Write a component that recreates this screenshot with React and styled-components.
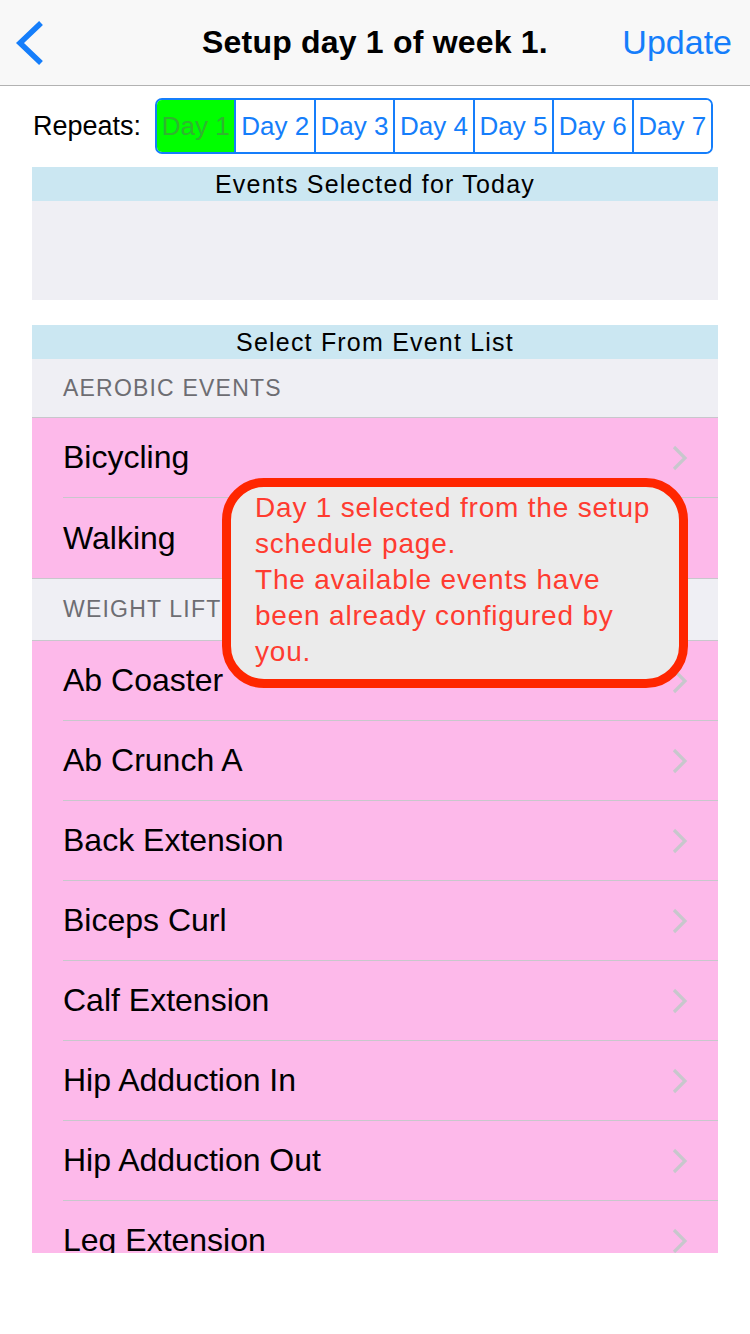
import React from "react";
import styled, { createGlobalStyle } from "styled-components";

const Global = createGlobalStyle`
  html, body { margin: 0; padding: 0; background: #ffffff; }
  body { font-family: "Liberation Sans", Arial, sans-serif; -webkit-font-smoothing: antialiased; }
  * { box-sizing: border-box; }
`;

const Screen = styled.div`
  position: relative;
  width: 750px;
  height: 1334px;
  overflow: hidden;
  background: #ffffff;
`;

const NavBar = styled.header`
  height: 86px;
  background: #f8f8f8;
  border-bottom: 1px solid #b2b2b2;
  display: flex;
  align-items: center;
  justify-content: space-between;
  padding: 0 18px 0 14px;
  position: relative;
`;

const BackButton = styled.button`
  border: none;
  background: none;
  padding: 0;
  width: 34px;
  height: 44px;
  display: flex;
  align-items: center;
`;

const Title = styled.h1`
  position: absolute;
  left: 0;
  right: 0;
  text-align: center;
  margin: 0;
  font-size: 32px;
  font-weight: 700;
  color: #000;
  pointer-events: none;
  letter-spacing: 0.2px;
`;

const NavAction = styled.span`
  font-size: 34px;
  color: #157efb;
`;

const Content = styled.main`
  padding: 12px 32px 0 32px;
`;

const RepeatsRow = styled.div`
  display: flex;
  align-items: center;
  height: 56px;
`;

const RepeatsLabel = styled.span`
  width: 123px;
  padding-left: 1px;
  font-size: 27px;
  color: #000;
`;

const Segmented = styled.div`
  display: flex;
  width: 558px;
  height: 56px;
  border: 2px solid #157efb;
  border-radius: 7px;
  overflow: hidden;
`;

const Segment = styled.div`
  flex: 1;
  display: flex;
  align-items: center;
  justify-content: center;
  font-size: 26px;
  color: ${(p) => (p.$active ? "#2fb52f" : "#157efb")};
  background: ${(p) => (p.$active ? "#00ff00" : "#ffffff")};
  & + & { border-left: 2px solid #157efb; }
`;

const Band = styled.div`
  height: 34px;
  background: #cbe7f2;
  display: flex;
  align-items: center;
  justify-content: center;
  font-size: 25px;
  letter-spacing: 1.2px;
  color: #000;
  margin-top: ${(p) => p.$top || 0}px;
`;

const SelectedBox = styled.div`
  height: 99px;
  background: #efeff4;
`;

const ListViewport = styled.div`
  height: 894px;
  overflow: hidden;
`;

const SectionHeader = styled.div`
  height: ${(p) => p.$h}px;
  background: #efeff4;
  display: flex;
  align-items: center;
  padding: 0 31px 0 31px;
  font-size: 23px;
  letter-spacing: 1.2px;
  color: #6d6d72;
  text-transform: uppercase;
  border-bottom: 1px solid #c8c7cc;
`;

const Row = styled.div`
  height: 80px;
  background: #fdb9ea;
  display: flex;
  padding-left: 31px;
`;

const RowInner = styled.div`
  flex: 1;
  display: flex;
  align-items: center;
  justify-content: space-between;
  padding-right: 29px;
  border-bottom: ${(p) => (p.$last ? "none" : "1px solid #c8c7cc")};
  font-size: 32px;
  color: #000;
`;

const RowGroup = styled.div`
  border-bottom: 1px solid #c8c7cc;
`;

const Callout = styled.div`
  position: absolute;
  left: 222px;
  top: 478px;
  width: 466px;
  height: 210px;
  border: 9px solid #ff2600;
  border-radius: 42px;
  background: #ebebeb;
  padding: 3px 19px 0 24px;
  font-size: 28px;
  line-height: 36px;
  letter-spacing: 0.8px;
  color: #ff3b30;
`;

const Chevron = () => (
  <svg width="18" height="28" viewBox="0 0 18 28">
    <path d="M3 3 L14 14 L3 25" fill="none" stroke="#c7c7cc" strokeWidth="3.2" />
  </svg>
);

const BackChevron = () => (
  <svg width="30" height="44" viewBox="0 0 30 44">
    <path d="M25 4 L6 22 L25 40" fill="none" stroke="#157efb" strokeWidth="5.5" strokeLinecap="square" />
  </svg>
);

const sections = [
  { title: "Aerobic Events", h: 59, items: ["Bicycling", "Walking"] },
  {
    title: "Weight Lifting Events",
    h: 62,
    items: [
      "Ab Coaster",
      "Ab Crunch A",
      "Back Extension",
      "Biceps Curl",
      "Calf Extension",
      "Hip Adduction In",
      "Hip Adduction Out",
      "Leg Extension",
      "Leg Press",
    ],
  },
];

export default function App() {
  const days = [1, 2, 3, 4, 5, 6, 7];
  return (
    <>
      <Global />
      <Screen>
        <NavBar>
          <BackButton aria-label="Back">
            <BackChevron />
          </BackButton>
          <Title>Setup day 1 of week 1.</Title>
          <NavAction>Update</NavAction>
        </NavBar>
        <Content>
          <RepeatsRow>
            <RepeatsLabel>Repeats:</RepeatsLabel>
            <Segmented>
              {days.map((d) => (
                <Segment key={d} $active={d === 1}>
                  Day {d}
                </Segment>
              ))}
            </Segmented>
          </RepeatsRow>
          <Band $top={13}>Events Selected for Today</Band>
          <SelectedBox />
          <Band $top={25}>Select From Event List</Band>
          <ListViewport>
            {sections.map((s) => (
              <React.Fragment key={s.title}>
                <SectionHeader $h={s.h}>{s.title}</SectionHeader>
                <RowGroup>
                  {s.items.map((it, i) => (
                    <Row key={it}>
                      <RowInner $last={i === s.items.length - 1}>
                        <span>{it}</span>
                        <Chevron />
                      </RowInner>
                    </Row>
                  ))}
                </RowGroup>
              </React.Fragment>
            ))}
          </ListViewport>
        </Content>
        <Callout>
          Day 1 selected from the setup schedule page.
          <br />
          The available events have been already configured by you.
        </Callout>
      </Screen>
    </>
  );
}
